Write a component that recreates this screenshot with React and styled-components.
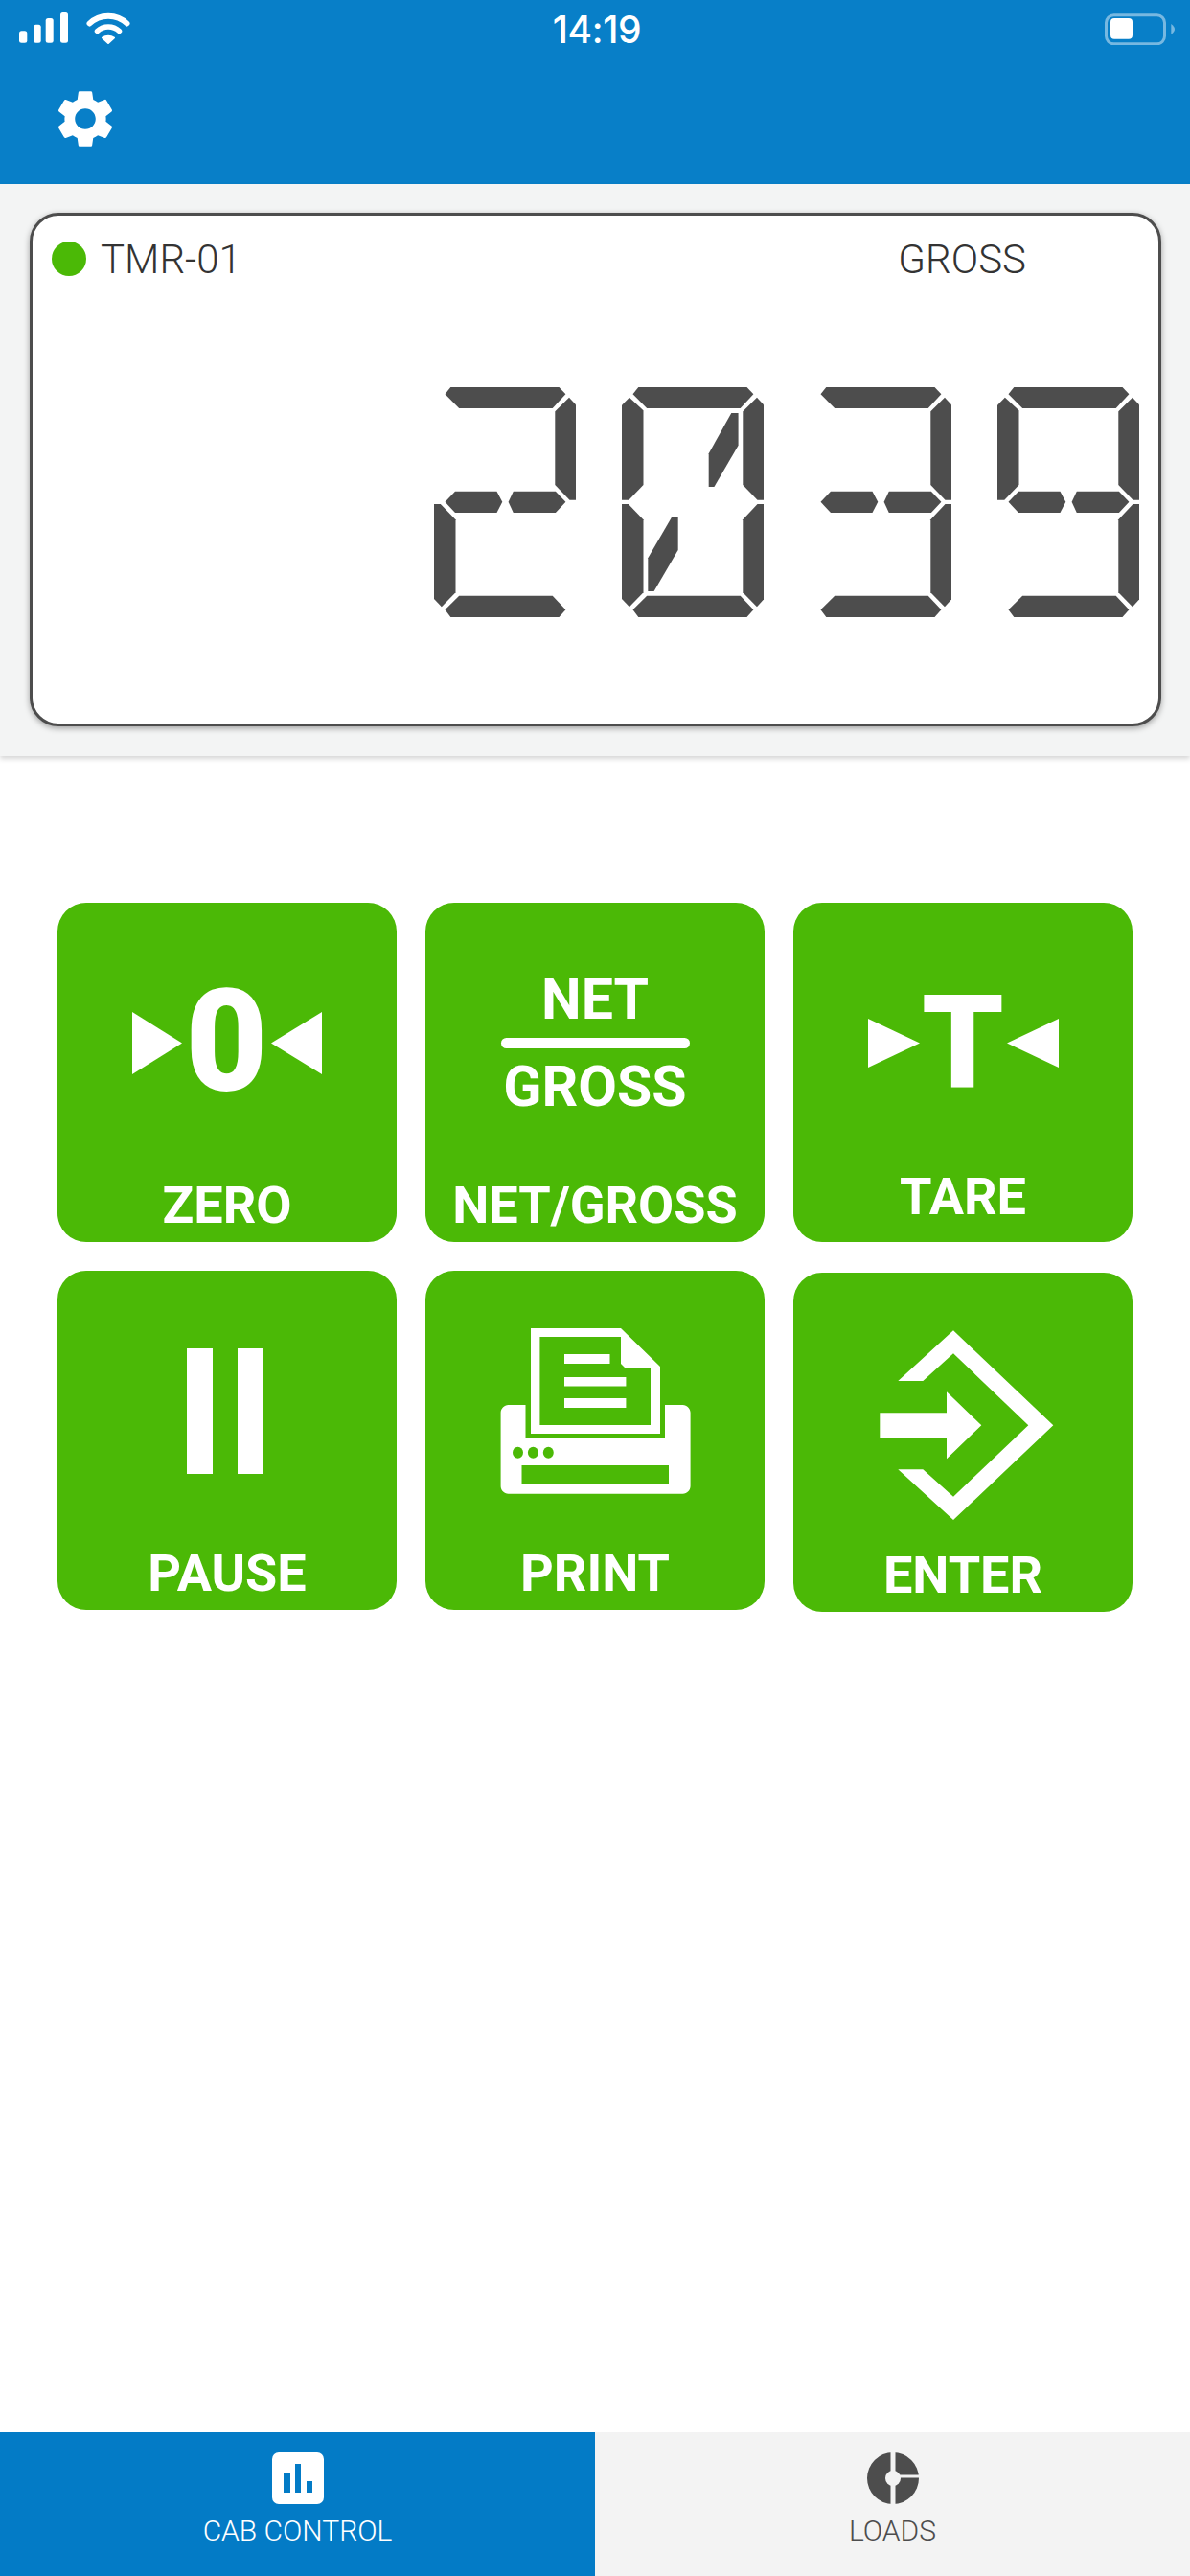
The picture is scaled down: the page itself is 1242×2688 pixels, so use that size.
import React from "react";
import styled, { createGlobalStyle } from "styled-components";
import { MdSettings } from "react-icons/md";

const BLUE = "#087fc8";
const GREEN = "#4bb906";
const INK = "#4d4d4d";

const GlobalStyle = createGlobalStyle`
  html, body { margin: 0; padding: 0; background: #fff; }
  body { font-family: Roboto, "Liberation Sans", sans-serif; }
  * { box-sizing: border-box; }
`;

const Screen = styled.div`
  width: 1242px;
  height: 2688px;
  display: flex;
  flex-direction: column;
  background: #fff;
  overflow: hidden;
`;

const Header = styled.header`
  height: 192px;
  flex: none;
  background: ${BLUE};
  color: #fff;
  display: flex;
  flex-direction: column;
`;

const StatusBar = styled.div`
  height: 62px;
  display: grid;
  grid-template-columns: 1fr auto 1fr;
  align-items: start;
  padding: 13px 16px 0 20px;
`;

const StatusLeft = styled.div`
  display: flex;
  align-items: flex-start;
  gap: 19px;
`;

const Clock = styled.div`
  font: 500 39px/36px Inter, "Liberation Sans", sans-serif;
  letter-spacing: -0.4px;
`;

const BatteryWrap = styled.div`
  justify-self: end;
`;

const Toolbar = styled.div`
  flex: 1;
  display: flex;
  align-items: center;
  padding: 0 0 6px 53px;
  font-size: 72px;
  line-height: 0;
`;

const ScalePanel = styled.section`
  height: 597px;
  flex: none;
  background: #f3f4f4;
  padding: 30px 30px 0 31px;
  box-shadow: 0 3px 5px rgba(0, 0, 0, 0.16);
  position: relative;
`;

const ScaleCard = styled.div`
  height: 536px;
  background: #fff;
  border: 3px solid ${INK};
  border-radius: 30px;
  box-shadow: 0 2px 6px rgba(0, 0, 0, 0.35);
  padding: 27px 20px 0 20px;
  display: flex;
  flex-direction: column;
`;

const CardHead = styled.div`
  display: flex;
  align-items: center;
  height: 36px;
  color: #333;
  font-weight: 300;
  font-size: 42px;
`;

const Dot = styled.span`
  width: 36px;
  height: 36px;
  border-radius: 50%;
  background: ${GREEN};
  margin-right: 15px;
  flex: none;
`;

const Mode = styled.span`
  margin-left: auto;
  margin-right: 118px;
`;

const Readout = styled.div`
  display: flex;
  justify-content: flex-end;
  gap: 47.6px;
  margin-top: 116px;
`;

const GridArea = styled.main`
  display: grid;
  grid-template-columns: repeat(3, 354px);
  grid-auto-rows: 354px;
  gap: 30px;
  padding: 153px 0 0 60px;
  flex: 1;
`;

const Tile = styled.button`
  appearance: none;
  border: 0;
  padding: 0;
  margin: ${(p) => p.$drop || 0}px 0 0;
  width: 354px;
  height: 354px;
  border-radius: 30px;
  background: ${GREEN};
  color: #fff;
  display: flex;
  flex-direction: column;
  align-items: center;
  font-family: Roboto, "Liberation Sans", sans-serif;
`;

const IconArea = styled.div`
  flex: none;
  height: 292px;
  width: 100%;
  margin-bottom: -30px;
  padding-top: ${(p) => p.$shift || 0}px;
  display: flex;
  align-items: center;
  justify-content: center;
`;

const TileLabel = styled.span`
  margin-top: auto;
  font-size: 54px;
  font-weight: 700;
  line-height: 40px;
  padding-bottom: ${(p) => p.$lift || 18}px;
  white-space: nowrap;
`;

const SymbolRow = styled.div`
  display: flex;
  align-items: center;
  justify-content: center;
`;

const BigGlyph = styled.span`
  font-size: ${(p) => p.$size}px;
  font-weight: 900;
  line-height: 1;
  width: ${(p) => p.$width}px;
  display: flex;
  justify-content: center;
`;

const Fraction = styled.div`
  display: flex;
  flex-direction: column;
  align-items: center;
  font-size: 59px;
  font-weight: 700;
  line-height: 40px;
`;

const FractionBar = styled.div`
  width: 197px;
  height: 11px;
  border-radius: 6px;
  background: #fff;
  margin: 20px 0 20px;
`;

const PauseBars = styled.div`
  display: flex;
  gap: 26px;
  margin-right: 4px;
`;

const PauseBar = styled.div`
  width: 27px;
  height: 131px;
  background: #fff;
`;

const TabBar = styled.nav`
  height: 150px;
  flex: none;
  display: grid;
  grid-template-columns: 1fr 1fr;
`;

const Tab = styled.div`
  background: ${(p) => (p.$active ? "#037bc6" : "#f3f3f3")};
  color: ${(p) => (p.$active ? "#fff" : INK)};
  display: flex;
  flex-direction: column;
  align-items: center;
  padding-top: 21px;
  font-size: 30px;
  font-weight: 300;
  line-height: 36px;
  gap: 10px;
`;

const SEGMENTS = {
  a: "17.3,0 130.5,0 137.4,7.3 123.7,22 26.2,22 11.5,7.3",
  b: "141,10.7 148.4,18.7 148.4,117.7 141.5,117.7 126.3,102 126.3,25.3",
  c: "148.4,122 141.5,122 126.3,138.3 126.3,214.3 141,229.3 148.4,221",
  d: "26.2,217.7 123.7,217.7 137.4,232.3 130.5,240 17.3,240 11.5,232.3",
  e: "0,122 6.8,122 22.5,138.3 22.5,214.3 7.9,229.3 0,221",
  f: "7.9,10.7 22.5,24.3 22.5,102 7.3,117.7 0,117.7 0,18.7",
  g1: "22,108.7 65.5,108.7 71.3,119.7 65.5,131 22,131 11.5,119.7",
  g2: "82.8,108.7 126.9,108.7 137.4,119.7 126.9,131 82.8,131 77.6,119.7",
  h: "114.3,27 121.6,27 121.6,60.7 96.4,104 90.7,104 90.7,69.3",
  i: "51.9,136 58.7,136 58.7,170 33.6,213 27.3,213 27.3,178.3",
};

// Which LCD segments each digit lights; the zero carries the slashed strokes.
const DIGIT_SEGMENTS = {
  0: ["a", "b", "c", "d", "e", "f", "h", "i"],
  1: ["b", "c"],
  2: ["a", "b", "g1", "g2", "e", "d"],
  3: ["a", "b", "g1", "g2", "c", "d"],
  4: ["f", "g1", "g2", "b", "c"],
  5: ["a", "f", "g1", "g2", "c", "d"],
  6: ["a", "f", "g1", "g2", "c", "d", "e"],
  7: ["a", "b", "c"],
  8: ["a", "b", "c", "d", "e", "f", "g1", "g2"],
  9: ["a", "b", "c", "d", "f", "g1", "g2"],
};

function SegmentDigit({ value }) {
  return (
    <svg width="148.4" height="240" viewBox="0 0 148.4 240" fill={INK}>
      {DIGIT_SEGMENTS[value].map((s) => (
        <polygon key={s} points={SEGMENTS[s]} />
      ))}
    </svg>
  );
}

function SegmentReadout({ value }) {
  return (
    <Readout role="img" aria-label={value}>
      {value.split("").map((d, i) => (
        <SegmentDigit key={i} value={d} />
      ))}
    </Readout>
  );
}

const SignalIcon = () => (
  <svg width="51" height="32" viewBox="0 0 51 32" fill="#fff">
    <rect x="0" y="19.300" width="8.300" height="12.400" rx="2.500" />
    <rect x="15" y="12.700" width="7.700" height="19" rx="2.500" />
    <rect x="27.700" y="6" width="8" height="25.700" rx="2.500" />
    <rect x="43" y="0" width="8" height="31.700" rx="2.500" />
  </svg>
);

const WifiIcon = () => (
  <svg width="46" height="33" viewBox="0 0 46 33" fill="none" stroke="#fff" strokeLinecap="round">
    <path d="M3.500 11.500C14 1 32 1 42.500 11.500" strokeWidth="6" />
    <path d="M11.500 19.500C18 13.500 28 13.500 34.500 19.500" strokeWidth="5.500" />
    <path d="M17 26.500C20.500 24 25.500 24 29 26.500L23 32Z" fill="#fff" strokeWidth="2" strokeLinejoin="round" />
  </svg>
);

const BatteryIcon = () => (
  <svg width="73" height="34" viewBox="0 0 73 34">
    <rect x="1.500" y="2.800" width="61" height="30" rx="8" fill="none" stroke="#fff" strokeOpacity="0.45" strokeWidth="3" />
    <rect x="6" y="6" width="23" height="21.700" rx="4" fill="#fff" transform="translate(0 0)" />
    <path d="M69.300 12C72 14 73 16 73 17.700C73 19 72 21 69.300 22.700Z" fill="#fff" fillOpacity="0.45" />
  </svg>
);

const Wedge = ({ w, h, dir }) => (
  <svg width={w} height={h} viewBox={`0 0 ${w} ${h}`} fill="#fff">
    <polygon points={dir === "right" ? `0,0 ${w},${h / 2} 0,${h}` : `${w},0 0,${h / 2} ${w},${h}`} />
  </svg>
);

const PrinterIcon = () => (
  <svg width="202" height="176" viewBox="0 0 202 176" fill="#fff">
    <path d="M34 2H128L169 42V112H34ZM43.400 11V103H159V43H132L128 39V11Z" fillRule="evenodd" />
    <rect x="69" y="29" width="47.500" height="10" />
    <rect x="69" y="53" width="64.400" height="9.500" />
    <rect x="69" y="75" width="64.400" height="10" />
    <path
      fillRule="evenodd"
      d="M10.600 82H28.500V117H174V82H192.600C197 82 200.600 86 200.600 90V166.700C200.600 171 197 174.700 192.600 174.700H10.600C6.200 174.700 2.600 171 2.600 166.700V90C2.600 86 6.200 82 10.600 82ZM24.500 145V165H178V145Z"
    />
    <g fill={GREEN}>
      <ellipse cx="20.500" cy="131.700" rx="5.500" ry="6" />
      <ellipse cx="36.400" cy="131.700" rx="5.500" ry="6" />
      <ellipse cx="52.300" cy="131.700" rx="5.500" ry="6" />
    </g>
  </svg>
);

const EnterIcon = () => (
  <svg width="194" height="202" viewBox="908 1386 194 202" fill="#fff">
    <polygon points="937.300,1441 995,1388.300 1099.300,1487.300 995,1586 937.300,1533.300 963.300,1533.300 995,1561.700 1073.300,1487.300 995,1412.300 963.300,1441" />
    <polygon points="918.300,1474.300 988,1474.300 988,1452.300 1024.300,1487.300 988,1522.300 988,1500 918.300,1500" />
  </svg>
);

const CabControlIcon = () => (
  <svg width="54" height="54" viewBox="0 0 54 54">
    <rect width="54" height="54" rx="7" fill="#fff" />
    <rect x="12" y="21" width="7" height="21" fill="#037bc6" />
    <rect x="24" y="12" width="6" height="30" fill="#037bc6" />
    <rect x="36" y="30" width="6" height="12" fill="#037bc6" />
  </svg>
);

const LoadsIcon = () => (
  <svg width="54" height="54" viewBox="0 0 54 54">
    <circle cx="27" cy="27" r="27" fill={INK} />
    <rect x="24.500" y="0" width="5" height="54" fill="#f3f3f3" />
    <rect x="27" y="23.500" width="27" height="3" fill="#f3f3f3" />
    <circle cx="27" cy="27" r="8" fill="#f3f3f3" />
  </svg>
);

export default function App() {
  return (
    <Screen>
      <GlobalStyle />
      <Header>
        <StatusBar>
          <StatusLeft>
            <SignalIcon />
            <WifiIcon />
          </StatusLeft>
          <Clock>14:19</Clock>
          <BatteryWrap>
            <BatteryIcon />
          </BatteryWrap>
        </StatusBar>
        <Toolbar>
          <MdSettings />
        </Toolbar>
      </Header>

      <ScalePanel>
        <ScaleCard>
          <CardHead>
            <Dot />
            <span>TMR-01</span>
            <Mode>GROSS</Mode>
          </CardHead>
          <SegmentReadout value="2039" />
        </ScaleCard>
      </ScalePanel>

      <GridArea>
        <Tile>
          <IconArea>
            <SymbolRow>
              <Wedge w={52} h={65} dir="right" />
              <BigGlyph $size={148} $width={93}>0</BigGlyph>
              <Wedge w={53} h={65} dir="left" />
            </SymbolRow>
          </IconArea>
          <TileLabel>ZERO</TileLabel>
        </Tile>
        <Tile>
          <IconArea>
            <Fraction>
              <span>NET</span>
              <FractionBar />
              <span>GROSS</span>
            </Fraction>
          </IconArea>
          <TileLabel>NET/GROSS</TileLabel>
        </Tile>
        <Tile>
          <IconArea>
            <SymbolRow>
              <Wedge w={54} h={51} dir="right" />
              <BigGlyph $size={136} $width={91}>T</BigGlyph>
              <Wedge w={54} h={51} dir="left" />
            </SymbolRow>
          </IconArea>
          <TileLabel $lift={27}>TARE</TileLabel>
        </Tile>
        <Tile>
          <IconArea>
            <PauseBars>
              <PauseBar />
              <PauseBar />
            </PauseBars>
          </IconArea>
          <TileLabel>PAUSE</TileLabel>
        </Tile>
        <Tile>
          <IconArea>
            <PrinterIcon />
          </IconArea>
          <TileLabel>PRINT</TileLabel>
        </Tile>
        <Tile $drop={2}>
          <IconArea $shift={26}>
            <EnterIcon />
          </IconArea>
          <TileLabel>ENTER</TileLabel>
        </Tile>
      </GridArea>

      <TabBar>
        <Tab $active>
          <CabControlIcon />
          CAB CONTROL
        </Tab>
        <Tab>
          <LoadsIcon />
          LOADS
        </Tab>
      </TabBar>
    </Screen>
  );
}
